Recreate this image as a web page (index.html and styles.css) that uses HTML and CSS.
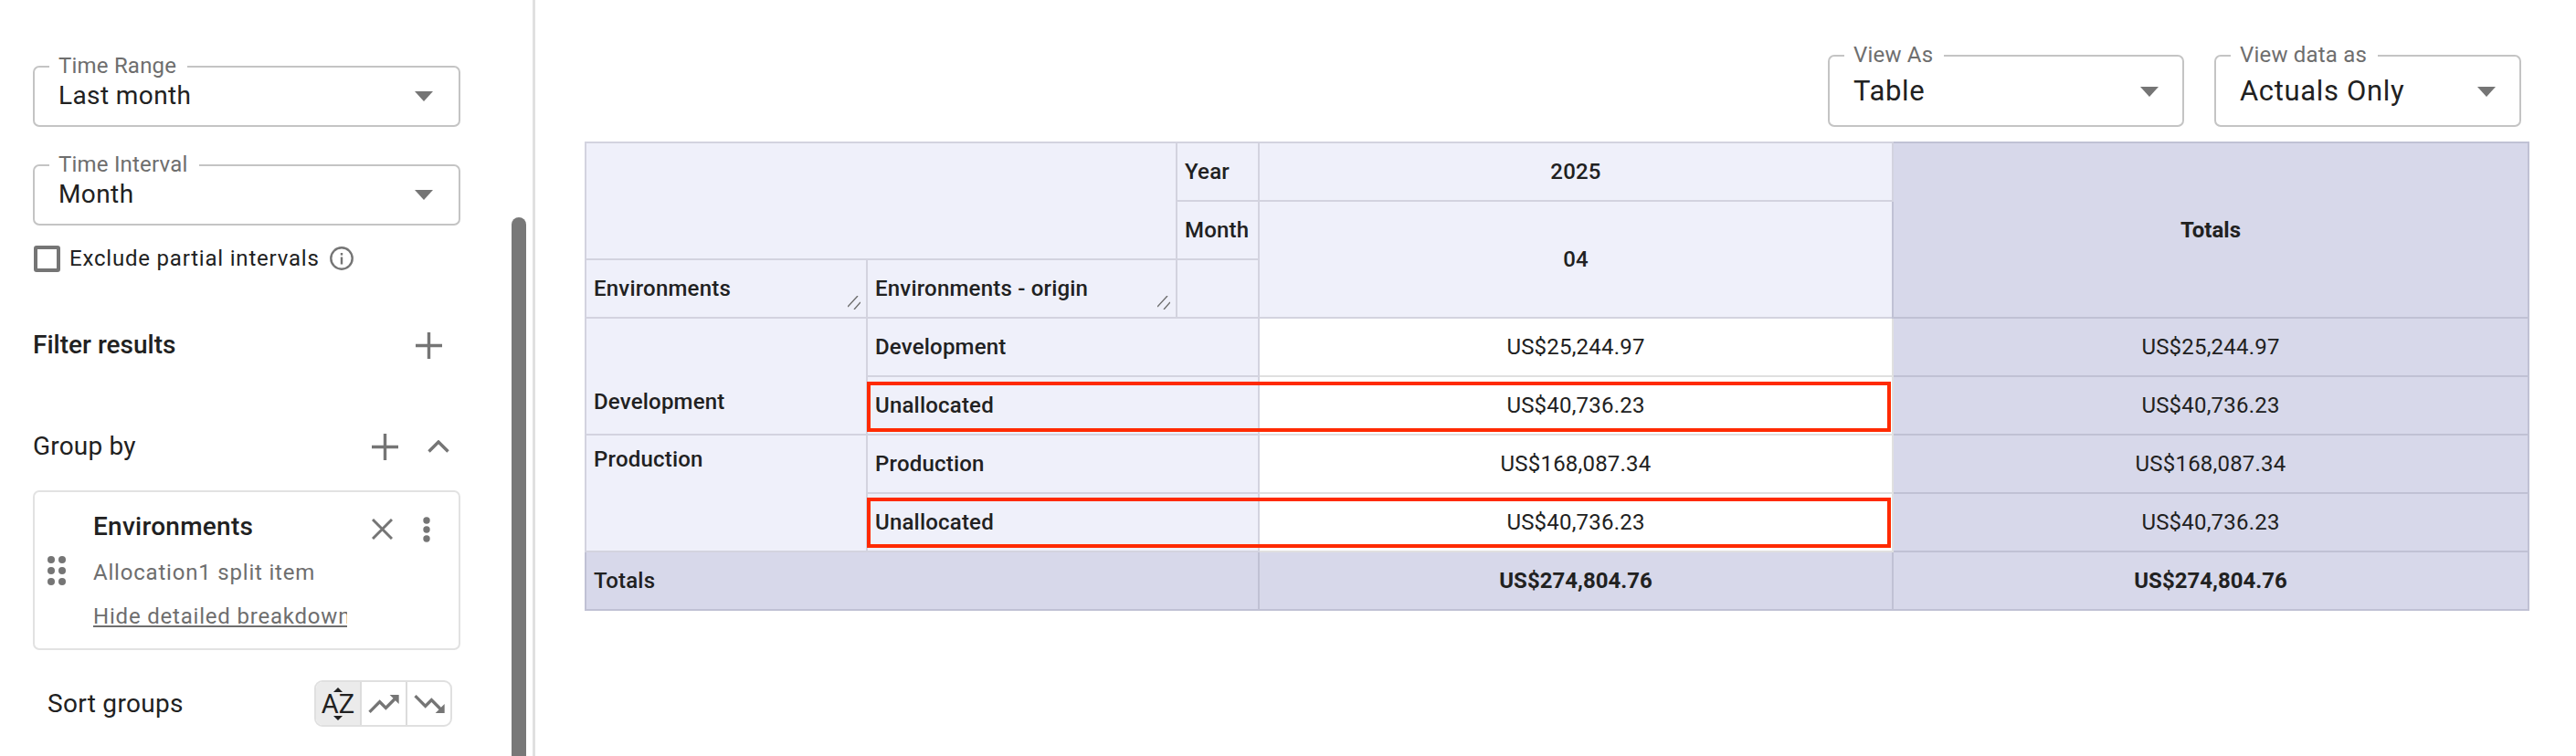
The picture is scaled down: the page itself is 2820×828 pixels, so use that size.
FILE: index.html
```html
<!DOCTYPE html>
<html lang="en">
<head>
<meta charset="utf-8">
<title>Cost report</title>
<link rel="stylesheet" href="styles.css">
</head>
<body>
<div class="app">
  <aside class="sidebar">
    <div class="select select-side">
      <span class="select-label">Time Range</span>
      <span class="select-value">Last month</span>
      <svg class="caret" viewBox="0 0 20 11"><path d="M0 0h20L10 11z"/></svg>
    </div>
    <div class="select select-side select-next">
      <span class="select-label">Time Interval</span>
      <span class="select-value">Month</span>
      <svg class="caret" viewBox="0 0 20 11"><path d="M0 0h20L10 11z"/></svg>
    </div>
    <div class="check-row">
      <span class="checkbox"></span>
      <span class="check-text">Exclude partial intervals</span>
      <svg class="info" viewBox="0 0 26 26"><circle cx="13" cy="13" r="11.7" fill="none" stroke="#757575" stroke-width="2.4"/><rect x="11.8" y="11.5" width="2.4" height="8" fill="#757575"/><rect x="11.8" y="7" width="2.4" height="2.6" fill="#757575"/></svg>
    </div>
    <div class="section-row filter-row">
      <span class="section-title">Filter results</span>
      <svg class="plus plus-filter" viewBox="0 0 29 29"><path d="M14.5 0v29M0 14.5h29"/></svg>
    </div>
    <div class="section-row group-row">
      <span class="section-title">Group by</span>
      <svg class="plus plus-group" viewBox="0 0 29 29"><path d="M14.5 0v29M0 14.5h29"/></svg>
      <svg class="chevron" viewBox="0 0 24 14"><path d="M1.5 12.5 12 2l10.5 10.5"/></svg>
    </div>
    <div class="card">
      <svg class="drag" viewBox="0 0 20 32"><circle cx="4" cy="4" r="4"/><circle cx="16" cy="4" r="4"/><circle cx="4" cy="16" r="4"/><circle cx="16" cy="16" r="4"/><circle cx="4" cy="28" r="4"/><circle cx="16" cy="28" r="4"/></svg>
      <div class="card-body">
        <div class="card-head">
          <span class="card-title">Environments</span>
          <svg class="close" viewBox="0 0 23 23"><path d="M1 1l21 21M22 1 1 22"/></svg>
          <svg class="more" viewBox="0 0 8 28"><circle cx="4" cy="4" r="3.7"/><circle cx="4" cy="14" r="3.7"/><circle cx="4" cy="24" r="3.7"/></svg>
        </div>
        <div class="card-sub">Allocation1 split item</div>
        <div class="card-link">Hide detailed breakdown</div>
      </div>
    </div>
    <div class="sort-row">
      <span class="sort-label">Sort groups</span>
      <div class="toggle">
        <span class="toggle-btn toggle-active">
          <svg class="tri-up" viewBox="0 0 10 5"><path d="M5 0l5 5H0z"/></svg>
          <span class="az">AZ</span>
          <svg class="tri-down" viewBox="0 0 10 5"><path d="M0 0h10L5 5z"/></svg>
        </span>
        <span class="toggle-btn">
          <svg class="trend" viewBox="0 0 24 24"><path d="M16 6l2.29 2.29-4.88 4.88-4-4L2 16.59 3.41 18l6-6 4 4 6.3-6.29L22 12V6z"/></svg>
        </span>
        <span class="toggle-btn">
          <svg class="trend" viewBox="0 0 24 24"><path d="M16 18l2.29-2.29-4.88-4.88-4 4L2 7.41 3.41 6l6 6 4-4 6.3 6.29L22 12v6z"/></svg>
        </span>
      </div>
    </div>
    <div class="scrollbar"></div>
  </aside>

  <main class="main">
    <div class="toolbar">
      <div class="select select-top select-view">
        <span class="select-label">View As</span>
        <span class="select-value">Table</span>
        <svg class="caret" viewBox="0 0 20 11"><path d="M0 0h20L10 11z"/></svg>
      </div>
      <div class="select select-top select-data">
        <span class="select-label">View data as</span>
        <span class="select-value">Actuals Only</span>
        <svg class="caret" viewBox="0 0 20 11"><path d="M0 0h20L10 11z"/></svg>
      </div>
    </div>

    <div class="table-wrap">
      <table class="pivot">
        <colgroup>
          <col class="col-a"><col class="col-b"><col class="col-c"><col class="col-d"><col class="col-e">
        </colgroup>
        <tbody>
          <tr>
            <th class="hd" colspan="2" rowspan="2"></th>
            <th class="hd">Year</th>
            <th class="hd center">2025</th>
            <th class="tot center strong" rowspan="3">Totals</th>
          </tr>
          <tr>
            <th class="hd">Month</th>
            <th class="hd center" rowspan="2">04</th>
          </tr>
          <tr>
            <th class="hd resizable">Environments
              <svg class="grip" viewBox="0 0 14 15"><path d="M0 12 11 0M7 15l7-8"/></svg>
            </th>
            <th class="hd resizable">Environments - origin
              <svg class="grip" viewBox="0 0 14 15"><path d="M0 12 11 0M7 15l7-8"/></svg>
            </th>
            <th class="hd"></th>
          </tr>
          <tr>
            <th class="hd group-low" rowspan="2">Development</th>
            <th class="hd" colspan="2">Development</th>
            <td class="val center">US$25,244.97</td>
            <td class="tot center">US$25,244.97</td>
          </tr>
          <tr>
            <th class="hd" colspan="2">Unallocated</th>
            <td class="val center">US$40,736.23</td>
            <td class="tot center">US$40,736.23</td>
          </tr>
          <tr>
            <th class="hd group-high" rowspan="2">Production</th>
            <th class="hd" colspan="2">Production</th>
            <td class="val center">US$168,087.34</td>
            <td class="tot center">US$168,087.34</td>
          </tr>
          <tr>
            <th class="hd" colspan="2">Unallocated</th>
            <td class="val center">US$40,736.23</td>
            <td class="tot center">US$40,736.23</td>
          </tr>
          <tr>
            <th class="tot plain" colspan="3">Totals</th>
            <td class="tot center strong">US$274,804.76</td>
            <td class="tot center strong">US$274,804.76</td>
          </tr>
        </tbody>
      </table>
      <div class="mark mark-one"></div>
      <div class="mark mark-two"></div>
    </div>
  </main>
</div>
</body>
</html>
```
FILE: styles.css
```css
* { box-sizing: border-box; }
html, body { margin: 0; padding: 0; background: #fff; }
body {
  width: 2820px;
  height: 828px;
  overflow: hidden;
  font-family: Roboto, "Liberation Sans", sans-serif;
  color: #212121;
}
.app { display: flex; height: 828px; }

/* Sidebar */
.sidebar {
  position: relative;
  flex: 0 0 586px;
  height: 828px;
  padding: 72px 0 0 36px;
  border-right: 3px solid #e0e0e0;
  overflow: hidden;
}
.scrollbar {
  position: absolute;
  left: 560px;
  top: 238px;
  width: 16px;
  height: 600px;
  background: #787878;
  border-radius: 8px 8px 0 0;
}

/* Select fields */
.select {
  position: relative;
  border: 2px solid #c4c4c4;
  border-radius: 7px;
  background: #fff;
}
.select-side { width: 468px; height: 67px; }
.select-next { margin-top: 41px; }
.select-top { height: 79px; }
.select-view { width: 390px; }
.select-data { width: 336px; }
.select-label {
  position: absolute;
  left: 16px;
  top: -17px;
  padding: 0 12px 0 10px;
  background: #fff;
  font-size: 24px;
  line-height: 30px;
  letter-spacing: 0.2px;
  color: #6e6e6e;
  white-space: nowrap;
}
.select-value {
  position: absolute;
  left: 26px;
  top: 13px;
  font-size: 28px;
  line-height: 36px;
  letter-spacing: 0.4px;
  white-space: nowrap;
}
.select-top .select-label { left: 16px; top: -17px; }
.select-top .select-value { left: 26px; top: 18px; font-size: 31px; line-height: 40px; letter-spacing: 0.65px; }
.caret { position: absolute; width: 20px; height: 11px; fill: #757575; }
.select-side .caret { right: 28px; top: 26px; }
.select-top .caret { right: 26px; top: 33px; }

/* Checkbox */
.check-row { display: flex; align-items: center; height: 30px; margin-top: 21px; }
.checkbox {
  width: 29px;
  height: 29px;
  margin-left: 1px;
  border: 4px solid #757575;
  border-radius: 3px;
}
.check-text { margin-left: 10px; font-size: 24px; line-height: 30px; letter-spacing: 0.8px; white-space: nowrap; }
.info { width: 26px; height: 26px; margin-left: 11px; }

/* Section rows */
.section-row { display: flex; align-items: center; width: 467px; height: 40px; }
.filter-row { margin-top: 60px; }
.group-row { margin-top: 71px; }
.section-title { flex: 1; font-size: 28px; font-weight: 500; line-height: 40px; letter-spacing: 0; white-space: nowrap; }
.group-row .section-title { font-weight: 400; letter-spacing: 0.2px; }
.plus { width: 29px; height: 29px; fill: none; stroke: #757575; stroke-width: 3.4; }
.plus-filter { margin-right: 19px; }
.plus-group { margin-right: 32px; }
.chevron { width: 24px; height: 14px; margin-right: 11px; fill: none; stroke: #757575; stroke-width: 3.4; }

/* Card */
.card {
  display: flex;
  align-items: center;
  width: 468px;
  height: 175px;
  margin-top: 28px;
  padding-left: 14px;
  border: 2px solid #e2e2e2;
  border-radius: 7px;
}
.drag { flex: 0 0 20px; width: 20px; height: 32px; fill: #757575; margin-right: 30px; }
.card-body { flex: 1; min-width: 0; align-self: flex-start; padding: 18px 31px 0 0; }
.card-head { display: flex; height: 40px; }
.card-title { flex: 1; font-size: 28px; font-weight: 500; line-height: 40px; letter-spacing: 0.25px; white-space: nowrap; }
.close { width: 23px; height: 23px; margin: 11px 33px 0 0; fill: none; stroke: #757575; stroke-width: 3; }
.more { width: 8px; height: 28px; margin-top: 9px; fill: #757575; }
.card-sub { margin-top: 10px; font-size: 24px; line-height: 40px; letter-spacing: 0.8px; color: #6e6e6e; white-space: nowrap; }
.card-link {
  width: 278px;
  margin-top: 8px;
  overflow: hidden;
  font-size: 24px;
  line-height: 40px;
  letter-spacing: 0.8px;
  color: #6e6e6e;
  text-decoration: underline;
  white-space: nowrap;
}

/* Sort */
.sort-row { display: flex; align-items: center; width: 459px; height: 51px; margin-top: 33px; padding-left: 16px; justify-content: space-between; }
.sort-label { font-size: 28px; line-height: 40px; letter-spacing: 0.3px; }
.toggle { display: flex; width: 151px; height: 51px; border: 2px solid #e0e0e0; border-radius: 9px; overflow: hidden; }
.toggle-btn {
  position: relative;
  display: flex;
  align-items: center;
  justify-content: center;
  flex: 0 0 50px;
  border-right: 2px solid #dcdcdc;
}
.toggle-btn:last-child { border-right: 0; flex: 1; }
.toggle-active { background: #ebebeb; }
.az { font-size: 29px; line-height: 30px; letter-spacing: 0; }
.tri-up, .tri-down { position: absolute; left: 19px; width: 10px; height: 5px; fill: #212121; }
.tri-up { top: 6px; }
.tri-down { bottom: 5px; }
.trend { width: 40px; height: 40px; fill: #757575; }

/* Main */
.main { flex: 1; min-width: 0; }
.toolbar { display: flex; justify-content: flex-end; gap: 33px; padding: 60px 60px 0 0; }
.table-wrap { position: relative; width: 2127px; margin: 16px 0 0 54px; }
.pivot { width: 2127px; table-layout: fixed; border-collapse: collapse; border-left: 2px solid #dcdcdc; border-top: 2px solid #dcdcdc; }
.col-a { width: 308px; }
.col-b { width: 339px; }
.col-c { width: 90px; }
.col-d { width: 694px; }
.col-e { width: 696px; }
.pivot tr { height: 64px; }
.pivot th, .pivot td {
  position: relative;
  padding: 0 8px;
  border: 2px solid #d3d3df;
  font-size: 24px;
  font-weight: 500;
  letter-spacing: 0.2px;
  text-align: left;
  line-height: 30px;
  white-space: nowrap;
}
.pivot .hd { background: #eff0fa; }
.pivot .val { background: #fff; border-color: #e0e0e0; font-weight: 400; }
.pivot .tot { background: #d7d8ea; border-color: #c0c1d4; font-weight: 400; }
.pivot .plain { font-weight: 500; }
.pivot .center { text-align: center; }
.pivot .strong { font-weight: 700; letter-spacing: 0; }
.resizable { vertical-align: top; }
.pivot .resizable { padding-top: 16px; }
.grip {
  position: absolute;
  right: 6px;
  bottom: 8px;
  width: 14px;
  height: 15px;
  fill: none;
  stroke: #6e6e6e;
  stroke-width: 1.4;
}
.pivot .group-low { vertical-align: bottom; padding-bottom: 20px; }
.pivot .group-high { vertical-align: top; padding-top: 11px; }
.mark { position: absolute; left: 309px; width: 1121px; height: 55px; border: 4px solid #ff2a00; pointer-events: none; }
.mark-one { top: 263px; }
.mark-two { top: 390px; }
```
